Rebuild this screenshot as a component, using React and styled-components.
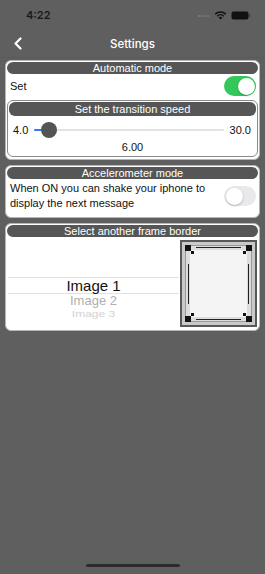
import React from 'react';
import styled, { createGlobalStyle } from 'styled-components';

const GlobalStyle = createGlobalStyle`
  html, body {
    margin: 0;
    padding: 0;
    background: #5f5f5f;
  }
  * {
    box-sizing: border-box;
  }
`;

const StyledScreen = styled.div`
  width: 265px;
  height: 574px;
  background: #5f5f5f;
  font-family: 'Liberation Sans', Arial, sans-serif;
  display: flex;
  flex-direction: column;
  position: relative;
  overflow: hidden;
`;

const StatusBar = styled.div`
  height: 30px;
  display: flex;
  align-items: center;
  justify-content: space-between;
  padding: 0 14px 0 26px;

  .time {
    font-family: Inter, 'Liberation Sans', sans-serif;
    font-size: 11px;
    font-weight: 600;
    color: #1a1a1a;
  }

  .icons {
    display: flex;
    align-items: center;
    gap: 4px;
  }
`;

const NavBar = styled.div`
  height: 28px;
  display: flex;
  align-items: center;
  justify-content: center;
  position: relative;
  color: #fff;
  font-family: Inter, 'Liberation Sans', sans-serif;
  font-size: 11.5px;
  font-weight: 500;
  border-bottom: 1px solid #595959;

  .back {
    position: absolute;
    left: 13px;
    top: 7px;
  }
`;

const Content = styled.div`
  display: flex;
  flex-direction: column;
  gap: 5px;
  padding: 2px 5px;
`;

const Card = styled.section`
  background: #fff;
  border: 1px solid ${({ $inner }) => ($inner ? '#8a8a8a' : '#b5b5b5')};
  border-radius: 6px;
  padding: ${({ $inner }) => ($inner ? '1px 1px 2px' : '1px 1px 2px')};
  display: flex;
  flex-direction: column;
`;

const Header = styled.div`
  background: #565656;
  color: #fff;
  border-radius: 6px;
  text-align: center;
  font-size: 11px;
  line-height: ${({ $big }) => ($big ? '14px' : '12px')};
  height: ${({ $big }) => ($big ? '14px' : '12px')};
`;

const Row = styled.div`
  display: flex;
  align-items: center;
  justify-content: space-between;
  padding: ${({ $pad }) => $pad || '2px 3px 2px 3px'};
  font-size: 11px;
  line-height: 15px;
  color: #111;
`;

const Switch = styled.div`
  width: 32px;
  height: 20px;
  border-radius: 10px;
  flex-shrink: 0;
  background: ${({ $on }) => ($on ? '#34c759' : '#e9e9eb')};
  position: relative;

  &:after {
    content: '';
    position: absolute;
    top: 1.5px;
    left: ${({ $on }) => ($on ? '13.5px' : '1.5px')};
    width: 17px;
    height: 17px;
    border-radius: 50%;
    background: #fff;
    box-shadow: 0 1px 2px rgba(0, 0, 0, 0.25);
  }
`;

const SliderRow = styled.div`
  display: flex;
  align-items: center;
  gap: 6px;
  height: 16px;
  margin-top: 6px;
  padding: 0 5px 0 4px;
  font-size: 11px;
  color: #111;
`;

const Track = styled.div`
  flex: 1;
  height: 2px;
  background: #e3e3e3;
  border-radius: 1px;
  position: relative;

  .fill {
    position: absolute;
    left: 0;
    top: 0;
    height: 2px;
    background: #2f7cf6;
    border-radius: 1px;
  }

  .thumb {
    position: absolute;
    top: -7px;
    width: 16px;
    height: 16px;
    margin-left: -8px;
    border-radius: 50%;
    background: #545454;
  }
`;

const Value = styled.div`
  text-align: center;
  font-size: 11px;
  line-height: 13px;
  color: #111;
  padding-top: 3px;
`;

const PickerRow = styled.div`
  display: flex;
  gap: 1px;
  padding: 3px 0 0 1px;
`;

const Picker = styled.div`
  flex: 1;
  height: 88px;
  display: flex;
  flex-direction: column;
  align-items: center;
  padding-top: 37px;
  overflow: hidden;
`;

const PickerItem = styled.div`
  width: 100%;
  text-align: center;
  font-size: ${({ $size }) => $size}px;
  line-height: ${({ $h }) => $h}px;
  height: ${({ $h }) => $h}px;
  color: ${({ $color }) => $color};
  border-top: ${({ $selected }) => ($selected ? '1px solid #e2e2e2' : 'none')};
  border-bottom: ${({ $selected }) => ($selected ? '1px solid #e2e2e2' : 'none')};
  box-sizing: content-box;
  transform: scaleY(${({ $squash }) => $squash || 1});
`;

const FrameBox = styled.div`
  width: 77px;
  height: 87px;
  border: 2px solid #585858;
  background: #cfcfcf;
  flex-shrink: 0;
  margin-right: 1px;
`;

const HomeIndicator = styled.div`
  position: absolute;
  bottom: 7px;
  left: 86px;
  width: 94px;
  height: 3px;
  border-radius: 2px;
  background: #2b2b2b;
`;

const Signal = () => (
  <svg width="12" height="6" viewBox="0 0 12 6">
    {[0, 3, 6, 9].map((x) => (
      <rect key={x} x={x} y="3" width="2" height="2" rx="0.5" fill="#777" />
    ))}
  </svg>
);

const Wifi = () => (
  <svg width="13" height="10" viewBox="0 0 13 10">
    <path d="M6.5 9.5 L4.6 7.6 A2.7 2.7 0 0 1 8.4 7.6 Z" fill="#111" />
    <path d="M3.2 6.2 A4.7 4.7 0 0 1 9.8 6.2" stroke="#111" strokeWidth="1.5" fill="none" />
    <path d="M1.2 4.1 A7.6 7.6 0 0 1 11.8 4.1" stroke="#111" strokeWidth="1.5" fill="none" />
  </svg>
);

const Battery = () => (
  <svg width="20" height="9" viewBox="0 0 20 9">
    <rect x="0.5" y="0.5" width="17" height="8" rx="2" fill="#111" />
    <rect x="18" y="3" width="1.5" height="3" rx="0.5" fill="#444" />
  </svg>
);

const Chevron = () => (
  <svg width="10" height="13" viewBox="0 0 10 13">
    <path d="M7.5 1.5 L2.5 6.5 L7.5 11.5" stroke="#fff" strokeWidth="2.2" fill="none" strokeLinecap="round" strokeLinejoin="round" />
  </svg>
);

const Frame = () => (
  <svg width="73" height="83" viewBox="0 0 73 83">
    <rect x="0" y="0" width="73" height="83" fill="#c9c9c9" />
    <rect x="3" y="3" width="67" height="77" fill="#9a9a9a" />
    <rect x="4" y="4" width="65" height="75" fill="#dcdcdc" />
    <rect x="8" y="8" width="57" height="67" fill="#f4f4f4" />
    <line x1="14" y1="5.5" x2="59" y2="5.5" stroke="#222" strokeWidth="1" />
    <line x1="14" y1="77.5" x2="59" y2="77.5" stroke="#222" strokeWidth="1" />
    <line x1="6.5" y1="22" x2="6.5" y2="62" stroke="#222" strokeWidth="1" />
    <line x1="66.5" y1="22" x2="66.5" y2="62" stroke="#222" strokeWidth="1" />
    <rect x="3" y="3" width="6" height="6" fill="#111" />
    <rect x="64" y="3" width="6" height="6" fill="#111" />
    <rect x="3" y="74" width="6" height="6" fill="#111" />
    <rect x="64" y="74" width="6" height="6" fill="#111" />
    <rect x="9" y="9" width="3" height="3" fill="#111" />
    <rect x="61" y="9" width="3" height="3" fill="#111" />
    <rect x="9" y="71" width="3" height="3" fill="#111" />
    <rect x="61" y="71" width="3" height="3" fill="#111" />
  </svg>
);

const App = () => {
  const min = 4;
  const max = 30;
  const speed = 6;
  const pct = ((speed - min) / (max - min)) * 100;

  return (
    <StyledScreen>
      <GlobalStyle />
      <StatusBar>
        <span className="time">4:22</span>
        <div className="icons">
          <Signal />
          <Wifi />
          <Battery />
        </div>
      </StatusBar>

      <NavBar>
        <span className="back">
          <Chevron />
        </span>
        Settings
      </NavBar>

      <Content>
        <Card>
          <Header>Automatic mode</Header>
          <Row $pad="2px 2px 4px 3px">
            <span>Set</span>
            <Switch $on />
          </Row>
          <Card $inner>
            <Header $big>Set the transition speed</Header>
            <SliderRow>
              <span>4.0</span>
              <Track>
                <div className="fill" style={{ width: `${pct}%` }} />
                <div className="thumb" style={{ left: `${pct}%` }} />
              </Track>
              <span>30.0</span>
            </SliderRow>
            <Value>{speed.toFixed(2)}</Value>
          </Card>
        </Card>

        <Card>
          <Header>Accelerometer mode</Header>
          <Row $pad="2px 2px 4px 3px">
            <span>
              When ON you can shake your iphone to
              <br />
              display the next message
            </span>
            <Switch />
          </Row>
        </Card>

        <Card>
          <Header>Select another frame border</Header>
          <PickerRow>
            <Picker>
              <PickerItem $selected $size={15} $h={15} $color="#111">
                Image 1
              </PickerItem>
              <PickerItem $size={13} $h={14} $color="#b0b0b0" $squash={0.92}>
                Image 2
              </PickerItem>
              <PickerItem $size={12} $h={12} $color="#d2d2d2" $squash={0.75}>
                Image 3
              </PickerItem>
            </Picker>
            <FrameBox>
              <Frame />
            </FrameBox>
          </PickerRow>
        </Card>
      </Content>

      <HomeIndicator />
    </StyledScreen>
  );
};

export default App;
